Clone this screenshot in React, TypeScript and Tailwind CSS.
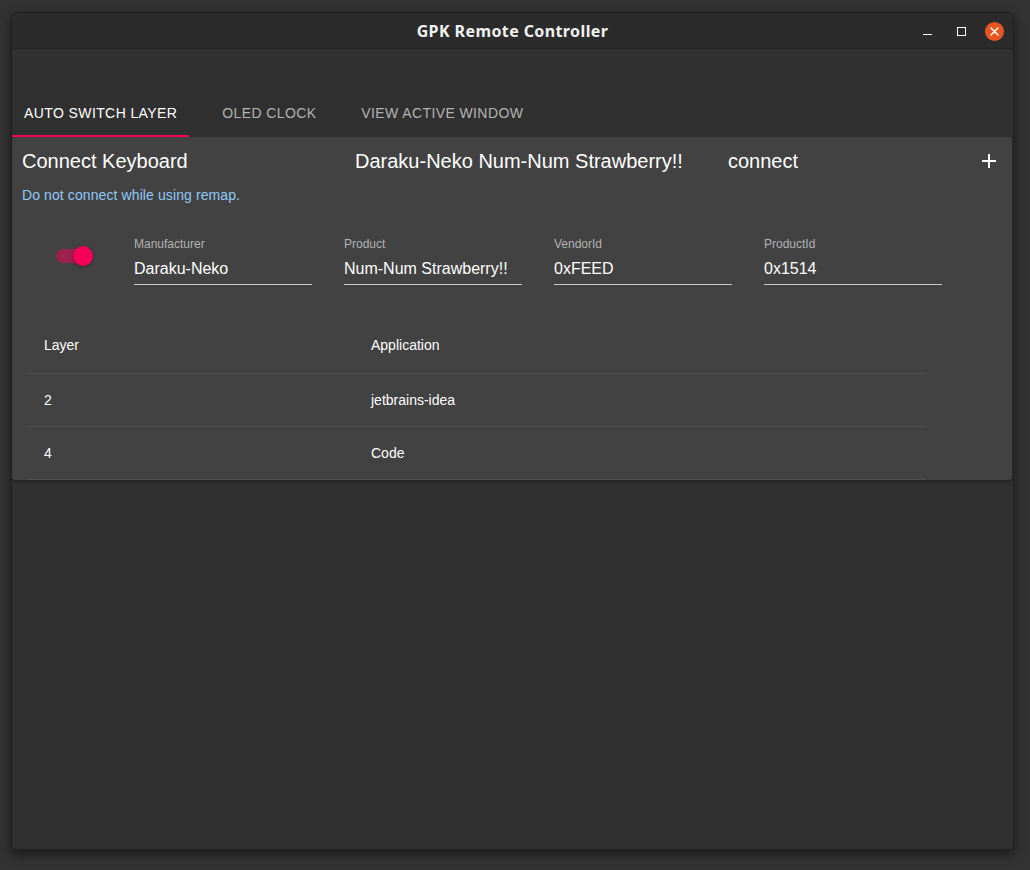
import React from "react";

const sans = { fontFamily: '"Liberation Sans", Arial, sans-serif' };

function Field({ label, value }: { label: string; value: string }) {
  return (
    <div className="flex w-[178px] flex-col">
      <div className="h-[14px] text-[12px] leading-[14px] text-[#b3b3b3]">{label}</div>
      <div className="mt-[8px] h-[19px] border-b border-[#c8c8c8] pb-[6px] text-[16px] leading-[19px] text-white box-content">
        {value}
      </div>
    </div>
  );
}

export default function App() {
  return (
    <div className="h-[870px] w-[1030px] overflow-hidden bg-[#333333] pl-[11px] pt-[12px]" style={sans}>
      <div className="flex h-[838px] w-[1003px] flex-col overflow-hidden rounded-t-[6px] border border-[#1f1f1f] bg-[#303030] shadow-[0_4px_12px_rgba(0,0,0,0.5)]">
        {/* title bar */}
        <div className="relative flex h-[36px] shrink-0 items-center justify-center border-b border-[#222222] bg-[#2b2b2b]">
          <span
            className="text-[16px] font-bold tracking-[0.4px] text-[#f2f2f2]"
            style={{ fontFamily: '"Noto Sans", "DejaVu Sans", sans-serif' }}
          >
            GPK Remote Controller
          </span>
          <div className="absolute right-[9px] top-0 flex h-[36px] items-center">
            <div className="flex h-[18px] w-[18px] items-end justify-center pb-[5px]">
              <div className="h-[1.5px] w-[9px] bg-white" />
            </div>
            <div className="ml-[16px] flex h-[18px] w-[18px] items-center justify-center">
              <div className="h-[9px] w-[9px] border-[1.5px] border-white" />
            </div>
            <div className="ml-[15px] flex h-[19px] w-[19px] items-center justify-center rounded-full bg-[#e95420]">
              <svg width="9" height="9" viewBox="0 0 9 9">
                <path d="M1 1 L8 8 M8 1 L1 8" stroke="white" strokeWidth="1.5" strokeLinecap="round" />
              </svg>
            </div>
          </div>
        </div>

        {/* content */}
        <div className="flex flex-1 flex-col pt-[40px]">
          {/* tabs */}
          <div className="flex h-[48px] shrink-0">
            <div className="relative flex items-center px-[12px] text-[14px] font-medium uppercase tracking-[0.4px] text-white">
              AUTO SWITCH LAYER
              <div className="absolute bottom-0 left-0 right-0 h-[2px] bg-[#f50057]" />
            </div>
            <div className="flex min-w-[160px] items-center justify-center px-[12px] text-[14px] font-medium uppercase tracking-[0.4px] text-[#b3b3b3]">
              OLED CLOCK
            </div>
            <div className="flex min-w-[160px] items-center justify-center px-[12px] text-[14px] font-medium uppercase tracking-[0.4px] text-[#b3b3b3]">
              VIEW ACTIVE WINDOW
            </div>
          </div>

          {/* card */}
          <div className="mr-[1px] rounded-[4px] bg-[#424242] shadow-[0_2px_2px_rgba(0,0,0,0.25)]">
            <div className="flex h-[48px] items-center pl-[10px] pr-[15px] text-[20px] text-white">
              <div className="w-[333px]">Connect Keyboard</div>
              <div className="w-[373px]">Daraku-Neko Num-Num Strawberry!!</div>
              <div className="flex-1">connect</div>
              <svg width="16" height="16" viewBox="0 0 16 16">
                <path d="M8 1 V15 M1 8 H15" stroke="white" strokeWidth="2" />
              </svg>
            </div>
            <div className="pl-[10px] text-[14px] leading-[20px] tracking-[0.1px] text-[#90caf9]">Do not connect while using remap.</div>

            <div className="mt-[32px] flex items-start gap-[32px] pl-[32px]">
              <div className="relative h-[38px] w-[58px]">
                <div className="absolute left-[12px] top-[12px] h-[14px] w-[34px] rounded-full bg-[#f50057] opacity-50" />
                <div className="absolute left-[29px] top-[9px] h-[20px] w-[20px] rounded-full bg-[#f50057] shadow-[0_1px_3px_rgba(0,0,0,0.4)]" />
              </div>
              <Field label="Manufacturer" value="Daraku-Neko" />
              <Field label="Product" value="Num-Num Strawberry!!" />
              <Field label="VendorId" value="0xFEED" />
              <Field label="ProductId" value="0x1514" />
            </div>

            <div className="mt-[32px] pl-[16px]">
              <table className="w-[898px] border-collapse text-[14px] text-white">
                <thead>
                  <tr className="h-[56px] border-b border-[#515151]">
                    <th className="w-[327px] px-[16px] pt-[2px] text-left font-normal">Layer</th>
                    <th className="px-[16px] pt-[2px] text-left font-normal">Application</th>
                  </tr>
                </thead>
                <tbody>
                  <tr className="h-[53px] border-b border-[#515151]">
                    <td className="px-[16px] pt-[2px]">2</td>
                    <td className="px-[16px] pt-[2px]">jetbrains-idea</td>
                  </tr>
                  <tr className="h-[53px] border-b border-[#515151]">
                    <td className="px-[16px] pt-[2px]">4</td>
                    <td className="px-[16px] pt-[2px]">Code</td>
                  </tr>
                </tbody>
              </table>
            </div>
          </div>
        </div>
      </div>
    </div>
  );
}
